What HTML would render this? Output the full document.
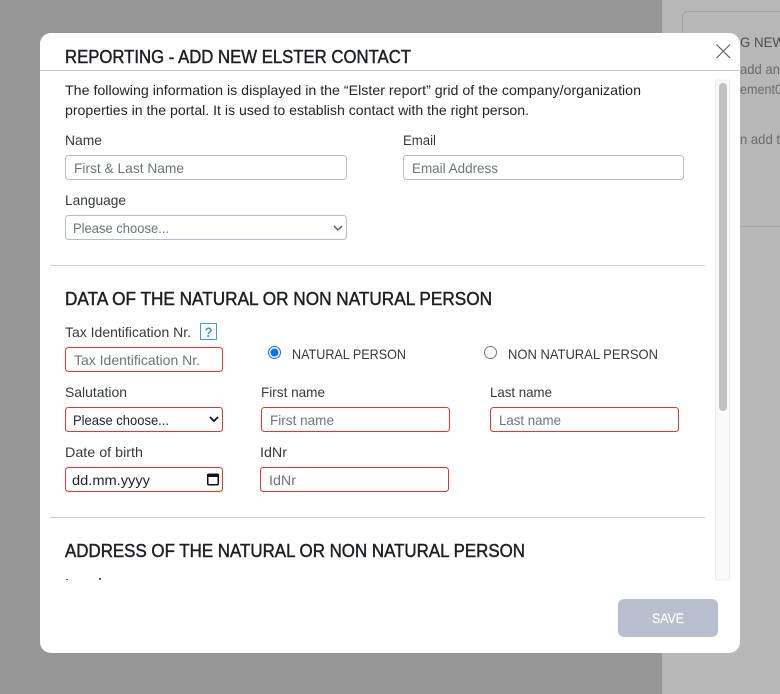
<!DOCTYPE html>
<html lang="en">
<head>
<meta charset="utf-8">
<title>Reporting - Add new Elster contact</title>
<style>
html,body{margin:0;padding:0;background:#969696;width:780px;height:694px;overflow:hidden}
svg{display:block}
text{font-family:"Liberation Sans",sans-serif;font-size:14px;fill:#212529;white-space:pre}
.h{font-size:18px;font-weight:normal;fill:#1c1f23;stroke:#1c1f23;stroke-width:.45px}
.p{fill:#6c757d}
.l{fill:#343a40}
.i{fill:#fff;stroke:#b9bdcb;stroke-width:1}
.e{fill:#fff;stroke:#e8352a;stroke-width:1}
.d{fill:none;stroke:#cfcfcf;stroke-width:1}
.bg{fill:#6b6b6b}
</style>
</head>
<body>
<svg width="780" height="694" viewBox="0 0 780 694" xmlns="http://www.w3.org/2000/svg">
<rect x="0" y="0" width="780" height="694" fill="#969696"/>
<rect x="662" y="0" width="118" height="694" fill="#b7b7b7"/>
<rect x="682.5" y="11.5" width="120" height="215" rx="5" fill="none" stroke="#a5a5a5"/>
<text x="740" y="47" textLength="45" lengthAdjust="spacingAndGlyphs" style="fill:#4f4f4f">G NEW</text>
<text x="740" y="74" textLength="40" lengthAdjust="spacingAndGlyphs" class="bg">add an</text>
<text x="740" y="94" textLength="42" lengthAdjust="spacingAndGlyphs" class="bg">ement0</text>
<text x="740" y="144" textLength="40" lengthAdjust="spacingAndGlyphs" class="bg">n add t</text>

<rect x="40" y="33" width="700" height="620" rx="11" fill="#fff"/>
<text x="65" y="63" textLength="346" lengthAdjust="spacingAndGlyphs" class="h">REPORTING - ADD NEW ELSTER CONTACT</text>
<line x1="40" y1="70.5" x2="740" y2="70.5" stroke="#c9cbd2"/>
<path d="M716.5 44.5L730 58M730 44.5L716.5 58" stroke="#555" stroke-width="1" fill="none"/>

<rect x="715.5" y="80" width="14" height="500" fill="#f9f9f9" stroke="#ececec"/>
<rect x="719" y="83" width="8" height="328" rx="4" fill="#c1c1c1"/>

<text x="65" y="95" textLength="576" lengthAdjust="spacingAndGlyphs">The following information is displayed in the “Elster report” grid of the company/organization</text>
<text x="65" y="115" textLength="464" lengthAdjust="spacingAndGlyphs">properties in the portal. It is used to establish contact with the right person.</text>

<text x="65" y="145" textLength="37" lengthAdjust="spacingAndGlyphs" class="l">Name</text>
<rect x="65.5" y="155.5" width="281" height="24" rx="3" class="i"/>
<text x="74" y="173" textLength="110" lengthAdjust="spacingAndGlyphs" class="p">First &amp; Last Name</text>
<text x="403" y="145" textLength="33" lengthAdjust="spacingAndGlyphs" class="l">Email</text>
<rect x="403.5" y="155.5" width="280" height="24" rx="3" class="i"/>
<text x="412" y="173" textLength="86" lengthAdjust="spacingAndGlyphs" class="p">Email Address</text>

<text x="65" y="205" textLength="61" lengthAdjust="spacingAndGlyphs" class="l">Language</text>
<rect x="65.5" y="215.5" width="281" height="24" rx="3" class="i"/>
<text x="73" y="233" textLength="96" lengthAdjust="spacingAndGlyphs" class="p">Please choose...</text>
<path d="M334 226l4 4 4-4" fill="none" stroke="#5a6268" stroke-width="1.5"/>

<line x1="50" y1="265.5" x2="705" y2="265.5" class="d"/>

<text x="65" y="305" textLength="427" lengthAdjust="spacingAndGlyphs" class="h">DATA OF THE NATURAL OR NON NATURAL PERSON</text>

<text x="65" y="337" textLength="126" lengthAdjust="spacingAndGlyphs" class="l">Tax Identification Nr.</text>
<rect x="200.5" y="323.5" width="16" height="16" fill="#fff" stroke="#3d9be0"/>
<text x="204.5" y="337" textLength="8" lengthAdjust="spacingAndGlyphs" style="font-weight:bold;fill:#3d9be0">?</text>
<rect x="65.5" y="347.5" width="157" height="24" rx="3" class="e"/>
<text x="74" y="365" textLength="126" lengthAdjust="spacingAndGlyphs" class="p">Tax Identification Nr.</text>

<circle cx="274.5" cy="352.5" r="6" fill="#fff" stroke="#0d6efd" stroke-width="1"/>
<circle cx="274.5" cy="352.5" r="4" fill="#0d6efd"/>
<text x="292" y="359" textLength="114" lengthAdjust="spacingAndGlyphs" class="l">NATURAL PERSON</text>
<circle cx="490.5" cy="352.5" r="6" fill="#fff" stroke="#767676" stroke-width="1"/>
<text x="508" y="359" textLength="150" lengthAdjust="spacingAndGlyphs" class="l">NON NATURAL PERSON</text>

<text x="65" y="397" textLength="62" lengthAdjust="spacingAndGlyphs" class="l">Salutation</text>
<rect x="65.5" y="407.5" width="157" height="24" rx="3" class="e"/>
<text x="73" y="425" textLength="96" lengthAdjust="spacingAndGlyphs">Please choose...</text>
<path d="M210 417l4 4 4-4" fill="none" stroke="#111" stroke-width="1.8"/>

<text x="261" y="397" textLength="64" lengthAdjust="spacingAndGlyphs" class="l">First name</text>
<rect x="261.5" y="407.5" width="188" height="24" rx="3" class="e"/>
<text x="270" y="425" textLength="64" lengthAdjust="spacingAndGlyphs" class="p">First name</text>

<text x="490" y="397" textLength="62" lengthAdjust="spacingAndGlyphs" class="l">Last name</text>
<rect x="490.5" y="407.5" width="188" height="24" rx="3" class="e"/>
<text x="499" y="425" textLength="62" lengthAdjust="spacingAndGlyphs" class="p">Last name</text>

<text x="65" y="457" textLength="78" lengthAdjust="spacingAndGlyphs" class="l">Date of birth</text>
<rect x="65.5" y="467.5" width="157" height="24" rx="3" class="e"/>
<text x="72" y="485" textLength="78" lengthAdjust="spacingAndGlyphs">dd.mm.yyyy</text>
<rect x="207.75" y="474.25" width="10.5" height="10.5" rx="1" fill="none" stroke="#111" stroke-width="1.5"/>
<rect x="207" y="474" width="12" height="3" fill="#111"/>

<text x="260" y="457" textLength="27" lengthAdjust="spacingAndGlyphs" class="l">IdNr</text>
<rect x="260.5" y="467.5" width="188" height="24" rx="3" class="e"/>
<text x="269" y="485" textLength="27" lengthAdjust="spacingAndGlyphs" class="p">IdNr</text>

<line x1="50" y1="517.5" x2="705" y2="517.5" class="d"/>

<text x="65" y="557" textLength="460" lengthAdjust="spacingAndGlyphs" class="h">ADDRESS OF THE NATURAL OR NON NATURAL PERSON</text>
<rect x="66" y="579" width="2" height="1" fill="#555"/>
<rect x="99" y="578" width="2" height="2" fill="#555"/>

<rect x="618" y="599" width="100" height="38" rx="6" fill="#b9bfce"/>
<text x="652" y="623" textLength="32" lengthAdjust="spacingAndGlyphs" style="fill:#fff;stroke:#fff;stroke-width:.2px">SAVE</text>
</svg>
</body>
</html>
